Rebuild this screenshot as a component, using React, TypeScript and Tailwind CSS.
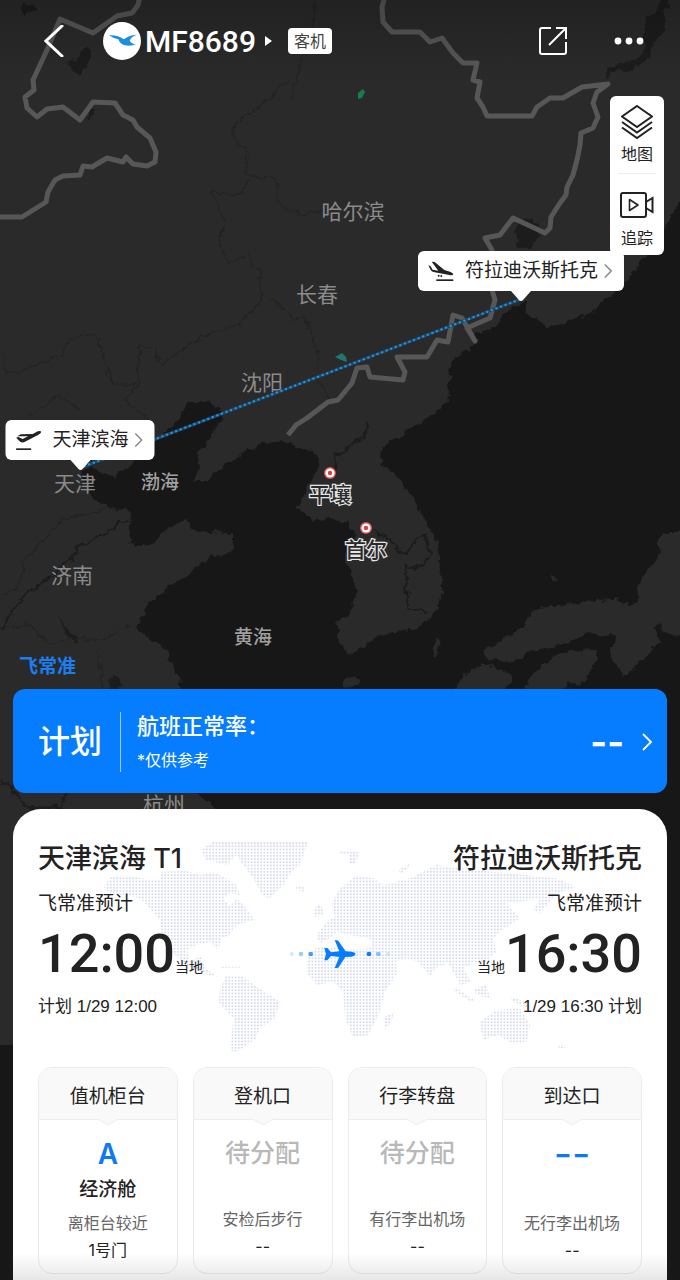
import clsx from "clsx";

const cityLabels = [
  { name: "哈尔滨", x: 353, y: 219 },
  { name: "长春", x: 317, y: 302 },
  { name: "沈阳", x: 262, y: 390 },
  { name: "天津", x: 75, y: 491 },
  { name: "济南", x: 72, y: 583 },
  { name: "杭州", x: 164, y: 812 },
];

const seaLabels = [
  { name: "渤海", x: 160, y: 489 },
  { name: "黄海", x: 253, y: 644 },
];

const capitals = [
  { name: "平壤", x: 330, y: 473 },
  { name: "首尔", x: 366, y: 528 },
];

const mainland =
  "M-20 -20H700V190L680 203L660 233L640 262L622 285L605 298L590 312L570 322L548 327L536 320L527 316L525 302L515 306L502 318L492 330L474 334L477 342L466 350L453 360L448 380L449 402L427 418L397 437L383 445L380 465L390 470L408 490L423 517L438 543L440 573L443 588L438 610L427 620L413 630L393 632L373 640L353 653L340 647L335 623L348 617L358 590L347 563L345 547L357 537L347 523L330 517L313 520L297 507L310 483L320 463L317 453L300 448L287 441L265 443L247 450L227 463L207 480L193 480L200 467L197 453L217 430L223 413L210 402L190 402L177 420L160 438L147 443L127 470L113 477L90 467L80 477L93 497L110 508L128 510L132 523L128 540L140 547L153 543L167 530L183 520L200 532L233 533L233 553L213 555L180 580L160 593L150 603L135 627L147 637L167 650L180 683L190 740L200 793L213 807L235 830L190 930L60 1040L0 1045H-20Z";

const islands =
  "M700 530L673 532L657 538L660 553L637 587L638 597L633 605L613 598L567 605L537 608L523 627L497 643L483 650L487 660L513 663L533 650L563 645L590 633L617 637L610 653L623 678L643 660L660 643L653 627L658 624L667 633L700 640Z M522 700L527 680L540 667L563 652L597 650L595 663L580 687L570 680L553 700Z M445 700L467 673L483 663L510 673L512 681L500 700Z M438 636L440 640L435 656L432 654Z M343 682L355 676L364 678L360 685L345 688Z";

const lakes =
  "M86 46L92 54L80 77L68 63L78 56Z M22 3L34 5L36 10L24 16L20 12Z M90 108L96 108L90 119L86 116Z M519 221L530 219L541 228L536 240L532 248L519 248L515 234Z M113 675L120 678L124 686L114 690L109 684Z M57 615L66 628L78 638L76 644L66 634Z M606 80L606 69L620 64L636 61L645 50L644 35L646 17L656 12L660 0L670 0L664 14L664 32L652 44L650 58L640 66L624 72L612 72Z";

const borders =
  "M140 -4L138 5L132 13L117 16L93 33L60 19L47 50L33 80L34 90L25 97L27 108L37 117L47 109L63 107L80 120L93 102L115 103L123 115L133 120L137 127L150 138L156 152L155 162L147 166L133 164L126 157L123 162L107 158L92 167L83 166L80 175L63 176L55 180L48 192L46 202L22 217H-4 M385 -4L382 7L383 22L392 32H420L430 42L442 38L453 53L463 63H477L473 80L480 82L477 98L483 107L487 116H532L537 107L550 98H563L582 87L608 84L597 92L593 103L598 117L593 128L581 133L580 145L577 160L573 175L567 187L566 195L560 203L551 217L550 228L545 233L513 218L500 235L485 238L492 250L490 283L495 300L490 318L467 328L475 341L462 318L453 315L448 342L437 340L427 357H397L405 372L403 380L370 377L367 367L357 368L352 383L338 400L328 402L307 418L296 425L288 435";

const provinceLines =
  "M316 2L312 30L302 58L292 98M288 80L262 105L236 122L232 135L245 150L248 175L276 178L280 205L300 214L335 210M248 180L240 195L212 192L225 225L220 240L228 264L248 254L260 275L262 300L240 324L205 335L160 365L155 348L140 345L138 384L112 385L96 334L70 338L62 354L20 372L6 373L0 350M270 298L295 320L305 315L318 355L318 375L330 400M138 384L125 400L150 420M30 415L60 396L80 412M128 508L100 510L62 520L25 560L18 590L0 595M0 628L30 625L48 645L72 638L100 640L132 625M96 650L104 690";

const rivers =
  "M132 522H120L107 533L78 547L72 558L50 577L40 584L20 600L10 614L2 630M367 424L364 438L352 444L345 453L336 454L336 470M376 530L390 540L396 550L408 553L416 540L424 535L430 552L424 565L405 568L408 608L426 613M0 780L10 785L26 807L60 808L66 793";

function FlightMap() {
  return (
    <svg viewBox="0 0 680 1280" className="block w-full" aria-label="航线地图">
      <defs>
        <filter id="coast" x="0" y="0" width="100%" height="100%">
          <feTurbulence type="fractalNoise" baseFrequency="0.12" numOctaves="3" seed="4" />
          <feDisplacementMap in="SourceGraphic" scale="9" xChannelSelector="R" yChannelSelector="G" />
        </filter>
        <linearGradient id="topShade" x1="0" y1="0" x2="0" y2="1">
          <stop offset="0" stopColor="#000" stopOpacity="0.2" />
          <stop offset="1" stopColor="#000" stopOpacity="0" />
        </linearGradient>
      </defs>
      <rect width="680" height="1280" fill="#171718" />
      <g filter="url(#coast)">
        <path d={mainland} fill="#2a2a2b" />
        <path d={islands} fill="#2a2a2b" />
        <path d={lakes} fill="#1c1c1d" />
        <circle cx="554" cy="579" r="3" fill="#2a2a2b" />
        <path d={provinceLines} fill="none" stroke="#232324" strokeWidth="1.2" />
        <path d={rivers} fill="none" stroke="#1a1a1b" strokeWidth="2" />
      </g>
      <path
        d={borders}
        fill="none"
        stroke="#575758"
        strokeWidth="5"
        strokeLinejoin="round"
      />
      <path d="M358 93L363 89L365 92L362 98L358 99Z" fill="#1c7a4c" />
      <path d="M335 357L342 353L346 357L347 362L341 360Z" fill="#20776c" />
      <rect width="680" height="80" fill="url(#topShade)" />

      <g
        fontFamily="'Noto Sans CJK SC', sans-serif"
        fontSize="21"
        textAnchor="middle"
        fill="#8b8b8c"
      >
        {cityLabels.map((c) => (
          <text key={c.name} x={c.x} y={c.y}>
            {c.name}
          </text>
        ))}
        {seaLabels.map((c) => (
          <text key={c.name} x={c.x} y={c.y} fontSize="19" fontWeight="500" fill="#a0a0a1">
            {c.name}
          </text>
        ))}
      </g>

      <line x1="80" y1="468" x2="521" y2="299" stroke="#17486e" strokeWidth="3" />
      <line
        x1="80"
        y1="468"
        x2="521"
        y2="299"
        stroke="#2f8fd0"
        strokeWidth="2.4"
        strokeLinecap="round"
        strokeDasharray="0.1 4.8"
      />

      {capitals.map((c) => (
        <g key={c.name}>
          <circle cx={c.x} cy={c.y} r="6" fill="#e0504f" />
          <circle cx={c.x} cy={c.y} r="4.6" fill="#fff" />
          <circle cx={c.x} cy={c.y} r="2.2" fill="#d8403f" />
          <text
            x={c.x}
            y={c.y + 29}
            textAnchor="middle"
            fontFamily="'Noto Sans CJK SC', sans-serif"
            fontSize="21"
            fontWeight="500"
            fill="#2a2a2b"
            stroke="#e4e4e4"
            strokeWidth="2.4"
            paintOrder="stroke"
          >
            {c.name}
          </text>
        </g>
      ))}
    </svg>
  );
}

function TakeoffIcon() {
  return (
    <svg viewBox="0 0 78 60" className="h-5 w-[26px]" fill="#222">
      <path d="M2 23L9 21L21 27L38 19L5 19L16 13L52 12L67 4Q75 1 77 5Q77 9 69 14L27 36Q20 39 14 35Z" />
      <rect x="2" y="55" width="45" height="5" />
    </svg>
  );
}

function LandingIcon() {
  return (
    <svg viewBox="0 0 78 60" className="h-5 w-[26px]" fill="#222">
      <path d="M1 13L7 15L14 26L31 29L11 2L20 3L49 27L66 32Q75 35 76 40Q74 44 64 42L20 34Q11 32 8 27Z" />
      <circle cx="32" cy="44" r="3" />
      <circle cx="40" cy="45" r="3" />
      <rect x="25" y="55" width="51" height="5" />
    </svg>
  );
}

function Chevron({ className }: { className: string }) {
  return (
    <svg viewBox="0 0 10 18" className={className} fill="none" stroke="currentColor">
      <path d="M1 1L9 9L1 17" strokeWidth="1.8" />
    </svg>
  );
}

function AirportPin({
  name,
  x,
  y,
  landing,
}: {
  name: string;
  x: number;
  y: number;
  landing?: boolean;
}) {
  return (
    <div
      className="absolute z-10 flex -translate-x-1/2 -translate-y-full flex-col items-center"
      style={{ left: `${(x / 680) * 100}%`, top: `${(y / 1280) * 100}%` }}
    >
      <button className="flex h-10 items-center rounded-md bg-white pr-3 pl-[10px] text-[19px] whitespace-nowrap text-[#222]">
        {landing ? <LandingIcon /> : <TakeoffIcon />}
        <span className="ml-[11px]">{name}</span>
        <Chevron className="ml-[6px] h-4 w-2 text-[#888]" />
      </button>
      <svg viewBox="0 0 20 10" className="h-[10px] w-5" fill="#fff">
        <path d="M0 0H20L12 9Q10 11 8 9Z" />
      </svg>
    </div>
  );
}

function Header() {
  return (
    <header className="flex h-[82px] items-center pr-9 pl-[35px] text-white">
      <button aria-label="返回" className="w-[68px] pl-[9px]">
        <svg viewBox="0 0 20 32" className="h-8 w-5" fill="none" stroke="#fff" strokeWidth="3">
          <path d="M18 1L2 16L18 31" strokeLinecap="round" />
        </svg>
      </button>
      <svg viewBox="0 0 114 114" className="size-[38px]">
        <circle cx="57" cy="57" r="57" fill="#fff" />
        <path
          d="M18 40Q44 38 62 52Q76 40 101 38Q84 44 80 56Q86 66 99 66Q84 74 66 70Q50 66 46 52Q32 50 18 40Z"
          fill="#1d8ddd"
        />
      </svg>
      <button className="ml-1 flex items-center gap-[9px]">
        <span className="font-['Roboto',sans-serif] text-[30px] font-medium">MF8689</span>
        <svg viewBox="0 0 7 10" className="h-[10px] w-[7px]" fill="#fff">
          <path d="M0 0L7 5L0 10Z" />
        </svg>
      </button>
      <span className="ml-4 rounded-sm bg-white px-[6px] text-base leading-[26px] text-[#444]">
        客机
      </span>
      <button aria-label="分享" className="ml-auto">
        <svg viewBox="0 0 30 30" className="size-[30px]" fill="none" stroke="#fff" strokeWidth="2">
          <path d="M13 2H4Q2 2 2 4V26Q2 28 4 28H26Q28 28 28 26V16M28 13V2H18M28 2L11 19" />
        </svg>
      </button>
      <button aria-label="更多" className="ml-[46px]">
        <svg viewBox="0 0 30 8" className="h-2 w-[30px]" fill="#fff">
          <circle cx="4" cy="4" r="3.4" />
          <circle cx="15" cy="4" r="3.4" />
          <circle cx="26" cy="4" r="3.4" />
        </svg>
      </button>
    </header>
  );
}

function MapTools() {
  return (
    <nav className="mt-[14px] mr-4 ml-auto flex w-[54px] flex-col items-center rounded-md bg-white text-base text-[#222]">
      <button className="flex flex-col items-center pt-2">
        <svg viewBox="0 0 32 36" className="h-9 w-8" fill="none" stroke="#222" strokeWidth="2">
          <path d="M16 2L31 12.5L16 23L1 12.5Z" />
          <path d="M1 18L16 28.500L31 18M1 23.500L16 34L31 23.500" />
        </svg>
        <span className="mt-[2px] leading-6">地图</span>
      </button>
      <hr className="mt-[7px] w-[38px] border-[#efefef]" />
      <button className="flex flex-col items-center pt-[17px] pb-[5px]">
        <svg viewBox="0 0 34 28" className="h-7 w-[34px]" fill="none" stroke="#222" strokeWidth="2">
          <rect x="1" y="2" width="25" height="24" rx="2" />
          <path d="M9.500 8.500L18 14L9.500 19.500Z" strokeLinejoin="round" strokeWidth="1.600" />
          <path d="M26 11L32.500 7V21L26 17" />
        </svg>
        <span className="mt-[7px] leading-6">追踪</span>
      </button>
    </nav>
  );
}

function StatusBanner() {
  return (
    <button className="mx-[13px] flex h-[104px] items-center rounded-xl bg-[#067dff] pt-[2px] pr-[15px] pl-[25px] text-left text-white">
      <span className="text-[32px] font-medium">计划</span>
      <span className="ml-[18px] h-[60px] w-px bg-white/60" />
      <span className="ml-4 flex flex-col">
        <span className="text-[22px] leading-9 font-medium">航班正常率：</span>
        <span className="text-base leading-8">*仅供参考</span>
      </span>
      <span className="ml-auto text-[36px] font-bold">--</span>
      <Chevron className="ml-[18px] h-[18px] w-[10px]" />
    </button>
  );
}

// continents, filled with a dot pattern
const continents =
  "M40 155L65 122H115L150 130L210 135L215 110L290 108L330 120L370 112L400 125L440 150L450 180L420 175L400 190L420 215L440 190L470 220L495 255L440 270L420 300L395 310L385 345L360 320L320 330L290 345L300 375L335 365L345 400L385 425L355 420L280 385L245 350L215 300L210 255L180 220L150 190L100 180L60 175Z M330 45L370 20H655L630 90L605 110L580 150L540 190L520 185L490 130L460 90L440 60L410 90L350 75Z M410 420L460 425L500 455L570 500L555 550L510 580L495 615L440 650L420 648L430 550L385 500L390 465Z M680 300L710 260L735 245L725 205L750 160L800 122L850 130L880 150L960 130L1000 110L1040 90L1150 105L1260 115L1400 130L1460 155L1400 175L1350 235L1330 225L1350 190L1290 200L1250 205L1290 250L1230 290L1210 310L1220 350L1175 390L1150 385L1120 400L1145 440L1110 450L1075 385L1035 400L1020 425L985 380L950 370L915 380L925 410L885 470L870 530L835 600L790 608L765 550L760 470L730 440L680 450L650 415V370L680 335L730 335L760 345L840 340L850 315L810 305L780 300L740 290L720 310L690 325Z M1170 560L1220 525L1290 520L1320 570L1310 620L1270 628L1225 600L1180 615Z M885 545L915 530L900 570L885 575Z M670 225L690 205L705 240L675 245Z M1095 455L1160 500L1140 500L1090 465Z M1150 465L1190 450L1200 490L1160 480Z M1260 485L1310 500L1320 520L1270 500Z M620 152L648 158L640 170L618 163Z M750 48L810 52L795 85L780 88L778 60L752 56Z M925 105L965 82L960 95L930 118Z M395 392H450V398H395Z M1405 630H1425V640H1405Z";

function WorldDots() {
  return (
    <svg
      viewBox="0 0 1500 675"
      className="pointer-events-none absolute top-[26px] left-1/2 h-[225px] w-[500px] -translate-x-1/2"
      aria-hidden="true"
    >
      <defs>
        <pattern id="dots" width="9.6" height="9.6" patternUnits="userSpaceOnUse">
          <circle cx="4.8" cy="4.8" r="3" fill="#d6daec" />
        </pattern>
      </defs>
      <path d={continents} fill="url(#dots)" />
    </svg>
  );
}

function PlaneTrack() {
  return (
    <svg viewBox="0 0 300 90" className="h-[30px] w-[100px]" fill="#067dff">
      <circle cx="5" cy="45" r="6" opacity="0.18" />
      <circle cx="33" cy="45" r="7" opacity="0.4" />
      <circle cx="62" cy="45" r="7" opacity="0.75" />
      <path
        transform="translate(103 4)"
        d="M94 41Q92 48 82 49L63 50L44 79Q42 83 37 83H31L45 50L20 47L9 60H0L5 41L0 23H9L20 36L45 33L31 0H37Q41 0 44 4L64 33L82 34Q92 35 94 41Z"
      />
      <circle cx="237" cy="45" r="7" />
      <circle cx="265" cy="45" r="7" opacity="0.45" />
      <circle cx="294" cy="45" r="6" opacity="0.15" />
    </svg>
  );
}

const cells = [
  {
    title: "值机柜台",
    value: "A",
    valueClass: "text-[28px] font-semibold text-[#0f78f5]",
    cabin: "经济舱",
    note: "离柜台较近",
    detail: "1号门",
  },
  {
    title: "登机口",
    value: "待分配",
    valueClass: "text-[25px] font-medium text-[#b8b8b8]",
    note: "安检后步行",
    detail: "--",
    pending: true,
  },
  {
    title: "行李转盘",
    value: "待分配",
    valueClass: "text-[25px] font-medium text-[#b8b8b8]",
    note: "有行李出机场",
    detail: "--",
    pending: true,
  },
  {
    title: "到达口",
    value: "--",
    valueClass: "text-[40px] text-[#0f78f5]",
    note: "无行李出机场",
    detail: "--",
  },
];

function FlightCard() {
  return (
    <section className="relative mx-[13px] mt-4 grow overflow-hidden rounded-t-[28px] bg-white px-[25px] pt-8 pb-[7px] text-[#222]">
      <WorldDots />
      <div className="relative">
        <div className="flex justify-between text-[27px] leading-9 font-medium">
          <h2>天津滨海 T1</h2>
          <h2>符拉迪沃斯托克</h2>
        </div>
        <div className="mt-[15px] flex justify-between text-[19px] leading-6">
          <span>飞常准预计</span>
          <span>飞常准预计</span>
        </div>
        <div className="mt-[10px] grid grid-cols-[1fr_auto_1fr] items-center">
          <div className="flex items-baseline">
            <span className="font-['Roboto',sans-serif] text-[54px] leading-[56px] font-medium">
              12:00
            </span>
            <span className="text-sm">当地</span>
          </div>
          <PlaneTrack />
          <div className="flex items-baseline justify-end">
            <span className="text-sm">当地</span>
            <span className="font-['Roboto',sans-serif] text-[54px] leading-[56px] font-medium">
              16:30
            </span>
          </div>
        </div>
        <div className="mt-[13px] flex justify-between font-['Liberation_Sans','Noto_Sans_CJK_SC',sans-serif] text-[17px] leading-6">
          <span>计划 1/29 12:00</span>
          <span>1/29 16:30 计划</span>
        </div>

        <div className="mt-12 grid grid-cols-4 gap-[15px]">
          {cells.map((c) => (
            <div
              key={c.title}
              className="rounded-[14px] border border-[#ebebeb] pb-2 text-center"
            >
              <div className="relative rounded-t-[13px] border-b border-[#ededed] bg-[#f9f9f9] pt-[7px] text-[19px] leading-[44px]">
                {c.title}
                <svg
                  viewBox="0 0 20 7"
                  className="absolute top-full left-1/2 h-[7px] w-5 -translate-x-1/2"
                >
                  <path d="M0 0L8 5Q10 6 12 5L20 0" fill="#f9f9f9" stroke="#ededed" />
                </svg>
              </div>
              <div
                className={clsx(
                  "mt-4 flex h-9 items-center justify-center",
                  c.valueClass
                )}
              >
                {c.value}
              </div>
              <div className="h-8 pt-[2px] text-[19px] leading-8 font-medium">{c.cabin}</div>
              <div
                className={clsx(
                  "text-base leading-[27px]",
                  c.pending ? "mt-[2px] mb-[5px]" : "mt-[6px] mb-px"
                )}
              >
                <div className="text-[#666]">{c.note}</div>
                <div>{c.detail}</div>
              </div>
            </div>
          ))}
        </div>
      </div>
      <div className="pointer-events-none absolute inset-x-0 bottom-0 h-7 bg-linear-to-b from-transparent to-black/10" />
    </section>
  );
}

export default function App() {
  return (
    <main className="relative flex min-h-screen flex-col overflow-hidden bg-[#171718] font-['Inter','Noto_Sans_CJK_SC',sans-serif]">
      <div className="absolute inset-x-0 top-0">
        <FlightMap />
        <AirportPin name="天津滨海" x={80} y={470} />
        <AirportPin name="符拉迪沃斯托克" x={521} y={301} landing />
      </div>

      <div className="relative min-h-[655px]">
        <Header />
        <MapTools />
      </div>

      <div className="relative flex grow flex-col">
        <span className="mb-[10px] ml-[19px] text-[19px] leading-6 font-bold text-[#1c7df0]">
          飞常准
        </span>
        <StatusBanner />
        <FlightCard />
      </div>
    </main>
  );
}
